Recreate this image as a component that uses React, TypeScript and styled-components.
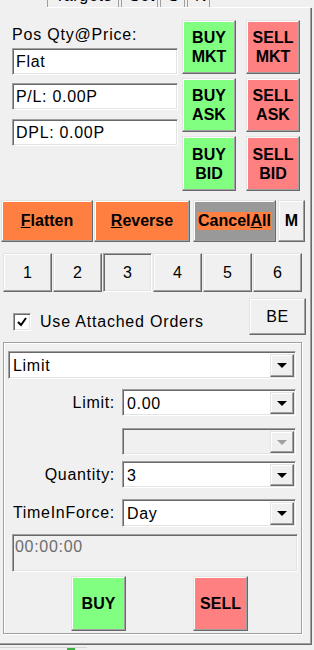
import React from 'react';
import styled, { createGlobalStyle, css } from 'styled-components';

type Tone = 'buy' | 'sell' | 'hot' | 'dull' | 'plain';

const GlobalStyle = createGlobalStyle`
  html, body {
    margin: 0;
    padding: 0;
    background: #f0f0f0;
  }

  body {
    font-family: "Liberation Sans", Arial, sans-serif;
    font-size: 16px;
    color: #000;
  }
`;

const raised = css`
  box-sizing: border-box;
  border: 1px solid;
  border-color: #e3e3e3 #696969 #696969 #e3e3e3;
  box-shadow: inset -1px -1px 0 #a0a0a0, inset 1px 1px 0 #fff;
`;

const sunken = css`
  box-sizing: border-box;
  border: 1px solid;
  border-color: #a0a0a0 #fff #fff #a0a0a0;
  box-shadow: inset 1px 1px 0 #696969, inset -1px -1px 0 #e3e3e3;
`;

const toneColor: Record<Tone, string> = {
  buy: '#80ff80',
  sell: '#ff8080',
  hot: '#ff7f40',
  dull: '#999999',
  plain: '#f0f0f0',
};

const Screen = styled.div`
  width: 314px;
  height: 650px;
  overflow: hidden;
  background: #f0f0f0;
`;

const TabStrip = styled.div`
  display: flex;
  height: 7px;
  margin-left: 47px;
  width: 263px;
  border-bottom: 1px solid #fff;
`;

const TabHead = styled.div<{ $width: number }>`
  box-sizing: border-box;
  width: ${(p) => p.$width}px;
  height: 7px;
  padding: 0 7px;
  margin-right: 2px;
  overflow: hidden;
  border-left: 1px solid #a0a0a0;
  border-right: 1px solid #a0a0a0;

  span {
    display: block;
    margin-top: -13px;
    line-height: 18px;
    letter-spacing: 0.7px;
    white-space: nowrap;
  }
`;

const Page = styled.div`
  box-sizing: border-box;
  width: 312px;
  height: 637px;
  border-right: 1px solid #696969;
  border-bottom: 1px solid #696969;
  box-shadow: inset -1px -1px 0 #a0a0a0;
`;

const TopSection = styled.div`
  display: flex;
  padding-top: 12px;
  padding-left: 12px;
`;

const InfoColumn = styled.div`
  display: flex;
  flex-direction: column;
  width: 166px;
`;

const FieldLabel = styled.div`
  margin-top: 6px;
  line-height: 18px;
  letter-spacing: 0.8px;
  white-space: nowrap;
`;

const ReadBox = styled.div<{ $gap: number }>`
  ${sunken};
  height: 27px;
  margin-top: ${(p) => p.$gap}px;
  padding-left: 3px;
  background: #fff;
  line-height: 25px;
  letter-spacing: 0.7px;
  white-space: nowrap;
`;

const QuickGrid = styled.div`
  display: grid;
  grid-template-columns: 54px 54px;
  grid-template-rows: 54px 54px 55px;
  column-gap: 10px;
  row-gap: 4px;
  margin-left: 4px;
`;

const ToneButton = styled.div<{ $tone: Tone }>`
  ${raised};
  display: flex;
  align-items: center;
  justify-content: center;
  background: ${(p) => toneColor[p.$tone]};
  font-weight: bold;
  text-align: center;
  white-space: nowrap;
`;

const QuickButton = styled(ToneButton)`
  line-height: 19px;
`;

const ActionRow = styled.div`
  display: flex;
  height: 42px;
  margin-top: 9px;
  padding-left: 1px;
`;

const ActionButton = styled(ToneButton)<{ $width: number; $gap: number }>`
  width: ${(p) => p.$width}px;
  margin-right: ${(p) => p.$gap}px;
  line-height: 18px;
`;

const HotText = styled.span`
  background: #ff7f40;
  padding: 0 1px;
`;

const ModeRow = styled.div`
  display: flex;
  gap: 1px;
  height: 39px;
  margin-top: 11px;
  padding-left: 3px;
`;

const ModeButton = styled.div<{ $active?: boolean }>`
  ${(p) => (p.$active ? sunken : raised)};
  display: flex;
  align-items: center;
  justify-content: center;
  width: 49px;
  background: #f0f0f0;
`;

const OptionRow = styled.div`
  display: flex;
  height: 37px;
  margin-top: 6px;
  padding-left: 13px;
`;

const CheckArea = styled.label`
  display: flex;
  align-items: flex-start;
  gap: 9px;
  margin-top: 15px;
  line-height: 18px;
  letter-spacing: 0.8px;
  white-space: nowrap;
`;

const CheckBox = styled.span`
  ${sunken};
  display: flex;
  align-items: center;
  justify-content: center;
  width: 18px;
  height: 18px;
  background: #fff;
`;

const SmallButton = styled.div`
  ${raised};
  display: flex;
  align-items: center;
  justify-content: center;
  width: 57px;
  margin-left: auto;
  margin-right: 5px;
  background: #f0f0f0;
  letter-spacing: 0.7px;
`;

const OrderGroup = styled.div`
  box-sizing: border-box;
  display: flex;
  flex-direction: column;
  width: 299px;
  height: 292px;
  margin-top: 7px;
  margin-left: 3px;
  border: 1px solid #a0a0a0;
  box-shadow: inset 1px 1px 0 #fff, 1px 1px 0 #fff;
`;

const ComboBox = styled.div<{ $disabled?: boolean; $width: number; $height: number }>`
  ${sunken};
  display: flex;
  width: ${(p) => p.$width}px;
  height: ${(p) => p.$height}px;
  padding: 2px 1px 1px 2px;
  background: ${(p) => (p.$disabled ? '#f0f0f0' : '#fff')};
`;

const ComboValue = styled.div`
  flex: 1;
  padding-left: 2px;
  line-height: 23px;
  letter-spacing: 0.7px;
  white-space: nowrap;
`;

const DropButton = styled.div<{ $disabled?: boolean }>`
  ${raised};
  display: flex;
  align-items: center;
  justify-content: center;
  width: 24px;
  background: #f0f0f0;
  color: ${(p) => (p.$disabled ? '#a0a0a0' : '#000')};
`;

const TypeSlot = styled.div`
  margin-top: 8px;
  margin-left: 4px;
`;

const FieldRow = styled.div<{ $gap: number }>`
  display: flex;
  align-items: center;
  gap: 7px;
  margin-top: ${(p) => p.$gap}px;
  padding-left: 8px;
`;

const RowLabel = styled.div`
  width: 103px;
  text-align: right;
  line-height: 18px;
  letter-spacing: 0.7px;
  white-space: nowrap;
`;

const TimeBox = styled.div`
  ${sunken};
  width: 286px;
  height: 38px;
  margin-top: 7px;
  margin-left: 8px;
  padding: 3px 2px;
  background: #f0f0f0;
  color: #6d6d6d;
  line-height: 18px;
  letter-spacing: 0.7px;
`;

const SubmitRow = styled.div`
  display: flex;
  gap: 67px;
  height: 55px;
  margin-top: 4px;
  padding-left: 67px;
`;

const SubmitButton = styled(ToneButton)`
  width: 55px;
`;

const BottomStrip = styled.div`
  display: flex;
  height: 6px;
  padding-top: 2px;
  box-sizing: border-box;
`;

const FooterTab = styled.div`
  width: 87px;
  height: 4px;
  border-top: 1px solid #d6d6d6;
  padding-left: 67px;
  box-sizing: border-box;

  span {
    display: block;
    width: 8px;
    height: 3px;
    background: #3cb043;
  }
`;

const Arrow = () => (
  <svg width="10" height="5" viewBox="0 0 10 5">
    <path d="M0 0 H10 L5 5 Z" fill="currentColor" />
  </svg>
);

const Check = () => (
  <svg width="10" height="10" viewBox="0 0 10 10">
    <path d="M1 5 L4 8 L9 1" fill="none" stroke="#000" strokeWidth="2" />
  </svg>
);

type ComboProps = {
  value?: string;
  width: number;
  height?: number;
  disabled?: boolean;
};

const Combo = ({ value = '', width, height = 27, disabled }: ComboProps) => (
  <ComboBox $width={ width } $height={ height } $disabled={ disabled }>
    <ComboValue>{ value }</ComboValue>
    <DropButton $disabled={ disabled }>
      <Arrow />
    </DropButton>
  </ComboBox>
);

const quick: Array<[Tone, string, string]> = [
  ['buy', 'BUY', 'MKT'],
  ['sell', 'SELL', 'MKT'],
  ['buy', 'BUY', 'ASK'],
  ['sell', 'SELL', 'ASK'],
  ['buy', 'BUY', 'BID'],
  ['sell', 'SELL', 'BID'],
];

const tabs: Array<[string, number]> = [
  ['Targets', 72],
  ['Set', 37],
  ['S', 25],
  ['N', 23],
];

const App = () => (
  <Screen>
    <GlobalStyle />
    <TabStrip>
      { tabs.map(([label, width]) => (
        <TabHead key={ label } $width={ width }><span>{ label }</span></TabHead>
      )) }
    </TabStrip>
    <Page>
      <TopSection>
        <InfoColumn>
          <FieldLabel>Pos Qty@Price:</FieldLabel>
          <ReadBox $gap={ 4 }>Flat</ReadBox>
          <ReadBox $gap={ 8 }>P/L: 0.00P</ReadBox>
          <ReadBox $gap={ 9 }>DPL: 0.00P</ReadBox>
        </InfoColumn>
        <QuickGrid>
          { quick.map(([tone, side, kind], i) => (
            <QuickButton key={ i } $tone={ tone }>
              { side }<br />{ kind }
            </QuickButton>
          )) }
        </QuickGrid>
      </TopSection>

      <ActionRow>
        <ActionButton $tone="hot" $width={ 92 } $gap={ 1 }>
          <span><u>F</u>latten</span>
        </ActionButton>
        <ActionButton $tone="hot" $width={ 96 } $gap={ 3 }>
          <span><u>R</u>everse</span>
        </ActionButton>
        <ActionButton $tone="dull" $width={ 83 } $gap={ 2 }>
          <HotText>Cancel<u>A</u>ll</HotText>
        </ActionButton>
        <ActionButton $tone="plain" $width={ 27 } $gap={ 0 }>M</ActionButton>
      </ActionRow>

      <ModeRow>
        { [1, 2, 3, 4, 5, 6].map((n) => (
          <ModeButton key={ n } $active={ n === 3 }>{ n }</ModeButton>
        )) }
      </ModeRow>

      <OptionRow>
        <CheckArea>
          <CheckBox><Check /></CheckBox>
          Use Attached Orders
        </CheckArea>
        <SmallButton>BE</SmallButton>
      </OptionRow>

      <OrderGroup>
        <TypeSlot>
          <Combo value="Limit" width={ 288 } height={ 28 } />
        </TypeSlot>
        <FieldRow $gap={ 10 }>
          <RowLabel>Limit:</RowLabel>
          <Combo value="0.00" width={ 174 } />
        </FieldRow>
        <FieldRow $gap={ 12 }>
          <RowLabel />
          <Combo width={ 174 } disabled />
        </FieldRow>
        <FieldRow $gap={ 6 }>
          <RowLabel>Quantity:</RowLabel>
          <Combo value="3" width={ 174 } />
        </FieldRow>
        <FieldRow $gap={ 11 }>
          <RowLabel>TimeInForce:</RowLabel>
          <Combo value="Day" width={ 174 } height={ 28 } />
        </FieldRow>
        <TimeBox>00:00:00</TimeBox>
        <SubmitRow>
          <SubmitButton $tone="buy">BUY</SubmitButton>
          <SubmitButton $tone="sell">SELL</SubmitButton>
        </SubmitRow>
      </OrderGroup>
    </Page>
    <BottomStrip>
      <FooterTab><span /></FooterTab>
    </BottomStrip>
  </Screen>
);

export default App;
